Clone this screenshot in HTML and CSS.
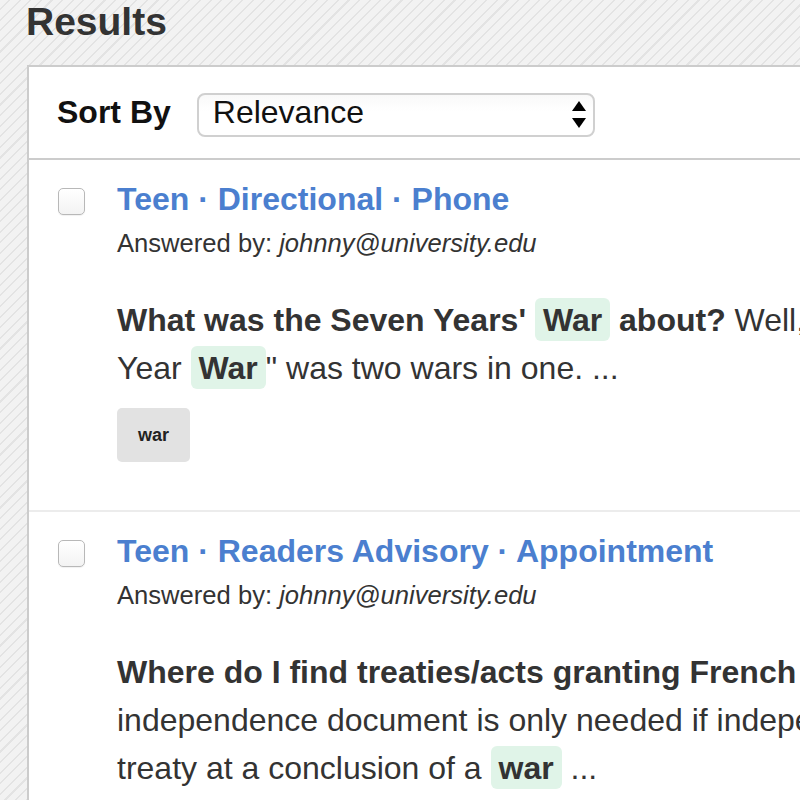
FILE: index.html
```html
<!DOCTYPE html>
<html lang="en">
<head>
    <meta charset="UTF-8">
    <meta name="viewport" content="width=device-width, initial-scale=1.0">
    <title>Results</title>
    <link rel="stylesheet" href="styles.css">
</head>
<body>
    <h1 class="page-title">Results</h1>

    <div class="results">
        <div class="sort-bar">
            <label class="sort-label">Sort By</label>
            <div class="sort-select">
                <span class="sort-value">Relevance</span>
                <svg class="sort-arrows" width="14" height="28" viewBox="0 0 14 28">
                    <polygon points="7,0 14,10 0,10" fill="#000"/>
                    <polygon points="0,17 14,17 7,27" fill="#000"/>
                </svg>
            </div>
        </div>

        <!-- result 1 -->
        <div class="result">
            <input type="checkbox" class="result-check">
            <div class="result-body">
                <a class="result-title" href="#">Teen · Directional · Phone</a>
                <div class="result-meta">Answered by: <em>johnny@university.edu</em></div>
                <p class="result-text"><b>What was the Seven Years' <mark>War</mark> about?</b> Well, the "Seven<br>Year <mark>War</mark>" was two wars in one. ...</p>
                <div class="result-tags"><span class="tag">war</span></div>
            </div>
        </div>

        <!-- result 2 -->
        <div class="result">
            <input type="checkbox" class="result-check">
            <div class="result-body">
                <a class="result-title" href="#">Teen · Readers Advisory · Appointment</a>
                <div class="result-meta">Answered by: <em>johnny@university.edu</em></div>
                <p class="result-text"><b>Where do I find treaties/acts granting French independence?</b><br>independence document is only needed if independence was given by<br>treaty at a conclusion of a <mark>war</mark> ...</p>
                <div class="result-tags"><span class="tag">war</span></div>
            </div>
        </div>
    </div>
</body>
</html>
```

FILE: styles.css
```css
body {
    margin: 0;
    padding: 0 0 0 27px;
    font-family: "Liberation Sans", Arial, sans-serif;
    color: #333;
    background: repeating-linear-gradient(135deg, #f2f2f2 0 6px, #e3e3e3 6px 7.5px);
    overflow: hidden;
}

.page-title { margin: 0 0 21px -1px; font-size: 39px; line-height: 44px; color: #333; }

.results { width: 1000px; background: #fff; border-top: 2px solid #ccc; border-left: 2px solid #ccc; }

/* sort row */
.sort-bar { display: flex; align-items: flex-start; gap: 26px; padding: 26px 28px 21px; border-bottom: 2px solid #ccc; }
.sort-label { font-size: 32px; font-weight: bold; line-height: 36px; margin-top: 1px; color: #111; }
.sort-select {
    width: 398px; height: 44px; box-sizing: border-box;
    display: flex; justify-content: space-between; align-items: center;
    padding: 0 7px 0 14px;
    border: 2px solid #d0d0d0; border-radius: 8px;
    background: linear-gradient(#f9f9f9, #fff 40%);
    font-size: 32px; line-height: 36px; color: #111;
}
.sort-value { align-self: flex-start; margin-top: -1px; }

/* result rows */
.result { display: flex; align-items: flex-start; gap: 32px; padding: 21px 29px 48px; border-bottom: 2px solid #ececec; }
.result-check {
    appearance: none; -webkit-appearance: none;
    width: 27px; height: 27px; margin: 7px 0 0; flex: none;
    border: 1px solid #b8b8b8; border-radius: 5px;
    background: linear-gradient(#fff, #f3f3f3);
    box-shadow: 0 1px 1px rgba(0,0,0,0.06);
}
.result-title { display: block; font-size: 32px; font-weight: bold; line-height: 36px; color: #4b7fcf; text-decoration: none; }
.result-meta { margin-top: 11px; font-size: 25.6px; line-height: 30px; color: #333; }
.result-text { margin: 38px 0 0; font-size: 32px; line-height: 48px; white-space: nowrap; color: #333; }
.result-text mark { background: #e0f4e8; color: #333; font-weight: bold; padding: 4px 8px 3px; border-radius: 6px; }
.result-tags { display: flex; margin-top: 16px; }
.tag { height: 54px; line-height: 54px; padding: 0 21px; background: #e2e2e2; border-radius: 5px; font-size: 18px; font-weight: bold; color: #222; }
```
